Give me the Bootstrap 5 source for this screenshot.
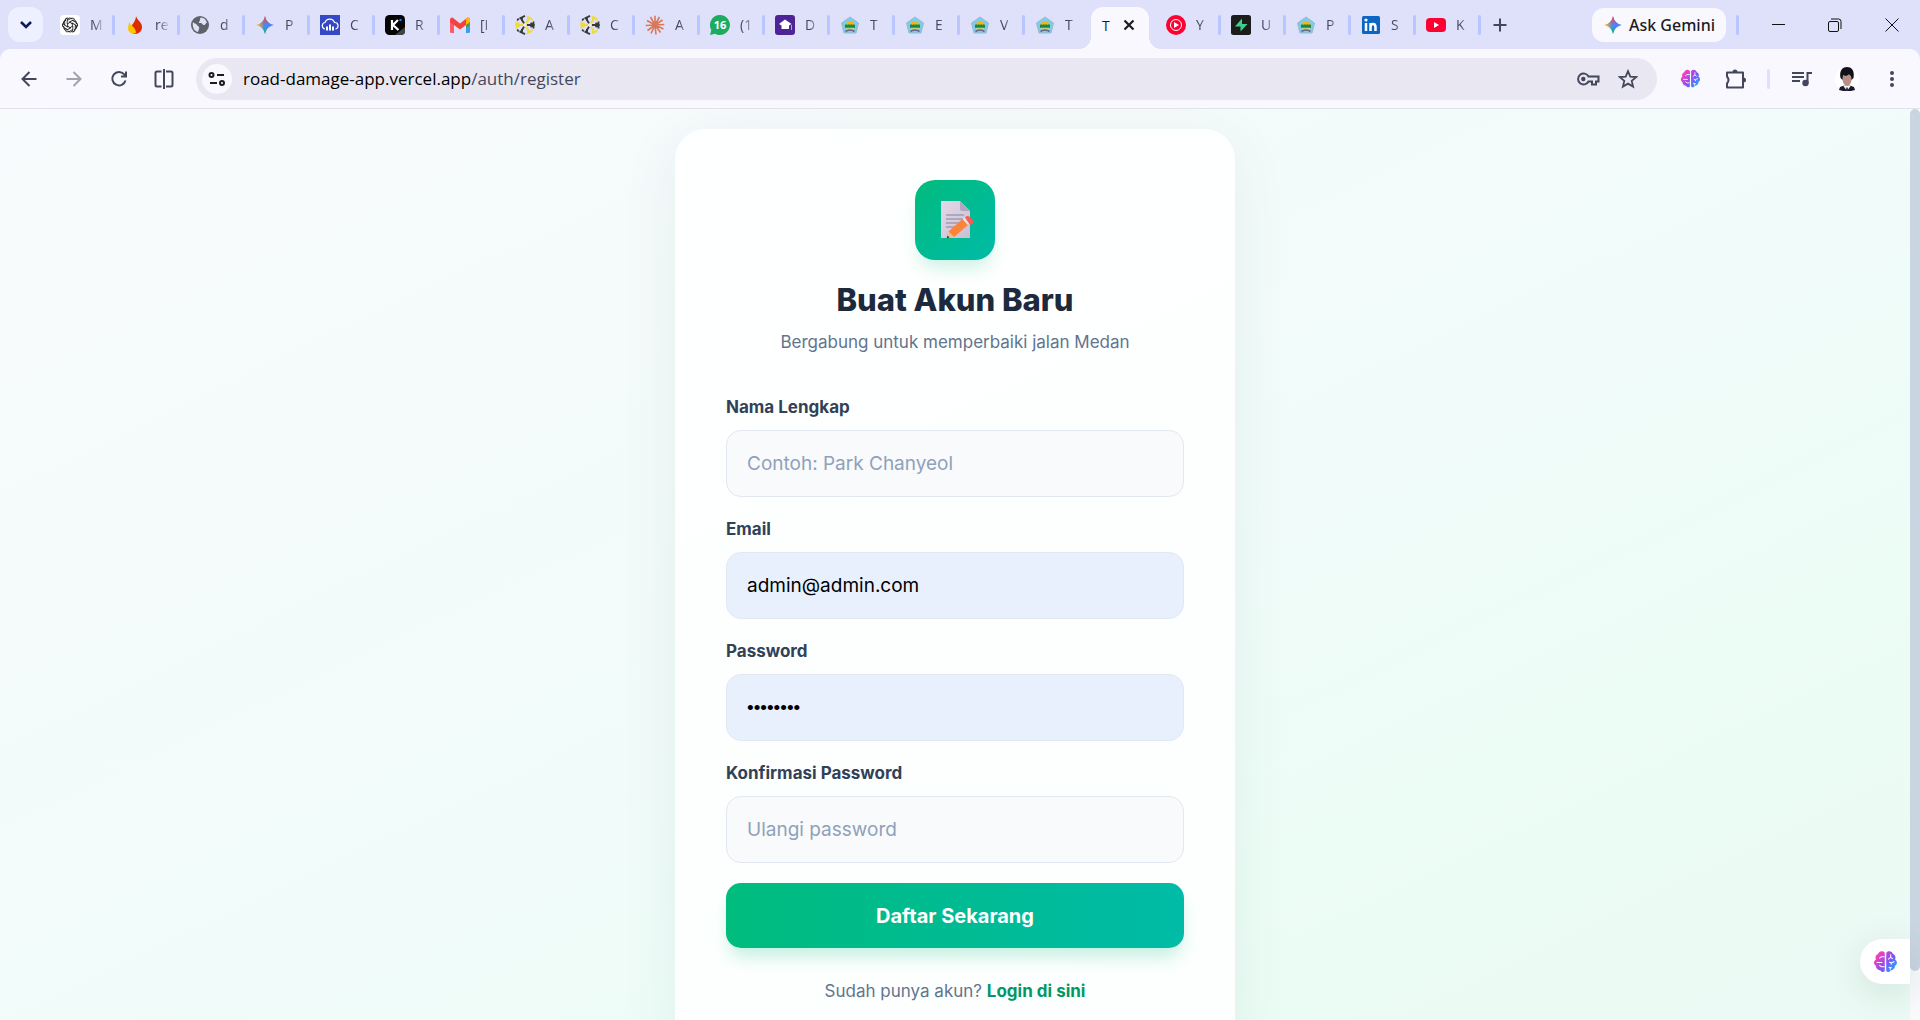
<!DOCTYPE html>
<html lang="id">
<head>
<meta charset="utf-8">
<meta name="viewport" content="width=device-width, initial-scale=1">
<title>Buat Akun Baru</title>
<link href="https://cdn.jsdelivr.net/npm/bootstrap@5.3.0/dist/css/bootstrap.min.css" rel="stylesheet">
<style>
html,body{height:100%}
body{overflow:hidden;font-family:Inter,"Open Sans",sans-serif;color:#1d293d;background:#f9f8ff}
.ui-font{font-family:"Open Sans","Noto Sans",sans-serif;background:#dfe0fa}
button,a{color:inherit}
.plain{border:0;background:none;padding:0;display:flex;align-items:center;justify-content:center;flex:none}
/* tab strip */
.strip{height:49px;padding-left:8px}
.search-tabs{width:35px;height:35px;border-radius:12px;background:#eef0ff;margin:7px 7px 0 0;align-self:flex-start}
.tab{width:65px;height:20px;padding-left:10px;gap:10px;flex:none;display:flex;align-items:center;color:#43475c;font-size:14px;text-decoration:none;position:relative}
.tab:not(.bare)::after{content:"";position:absolute;right:0;top:0;width:3px;height:20px;border-radius:2px;background:#b9c5ff}
.tab svg{width:20px;height:20px;flex:none}
.tab span{white-space:nowrap;-webkit-mask-image:linear-gradient(90deg,#000 4px,transparent 15px);mask-image:linear-gradient(90deg,#000 4px,transparent 15px)}
.tab-on{width:58px;height:42px;align-self:flex-end;background:#f9f8ff;border-radius:12px 12px 0 0;position:relative;margin:0 7px 0 1px;padding:0 14px 6px 11px;color:#1c1b20;font-size:14px;flex:none}
.tab-on::before,.tab-on::after{content:"";position:absolute;bottom:0;width:12px;height:12px}
.tab-on::before{left:-12px;background:radial-gradient(circle at 0 0,transparent 12px,#f9f8ff 12px)}
.tab-on::after{right:-12px;background:radial-gradient(circle at 100% 0,transparent 12px,#f9f8ff 12px)}
.new-tab{margin-left:12px}
.gemini{height:34px;width:134px;border-radius:12px;background:#f9f8ff;gap:6px;font-size:16px;font-weight:600;color:#1c1b20;font-family:"Noto Sans","Open Sans",sans-serif;font-weight:500}
.bar-sep{width:3px;height:20px;border-radius:2px;background:#b9c5ff;margin:0 10px}
.bar-sep.pale{background:#dfe0ff;margin:0 17px}
.win{width:57px;height:49px}
/* toolbar */
.tools{height:60px;border-bottom:1px solid #e2e1ec;border-radius:10px 10px 0 0;color:#43475c;padding:0 14px;background:#f9f8ff}
.tool{width:29px;height:29px}
.omni{height:42px;border-radius:21px;background:#e9e7f1;padding:0 15px 0 6px;margin:0 19px 0 18px;min-width:0;gap:11px}
.site-info{width:30px;height:30px;border-radius:50%;background:#f9f8ff;color:#1c1b20}
.url{font-size:17px;min-width:0}
/* page */
.viewport{min-height:0;overflow:hidden;background:#f8fafc}
.scene{background:linear-gradient(to bottom right,#f8fafc 0%,#f0fcf9 60%,#ecfdf5 76%,#ebfaf4 100%);min-width:0;overflow:hidden;padding-top:20px}
.signup{width:560px;height:fit-content;border:1px solid #fff;border-radius:30px;background:rgba(255,255,255,.85);padding:50px;box-shadow:0 14px 60px rgba(15,80,90,.07)}
.emblem{width:80px;height:80px;border-radius:20px;background:linear-gradient(135deg,#00bc7d,#00bba7);box-shadow:0 12px 18px -4px rgba(0,188,125,.2);margin-bottom:20px}
h1{font-size:31px;line-height:39px;font-weight:800;margin-bottom:10px;color:#1d293d}
.tagline{font-size:17px;line-height:26px;color:#62748e;margin-bottom:40px}
.field-label{font-size:17px;line-height:25px;font-weight:700;color:#314158;margin-bottom:10px;display:block}
.field{height:67px;border:1px solid #e2e8f0;border-radius:15px;background:#f8fafc;padding:0 20px;font-size:19px;color:#000;margin-bottom:20px}
.field::placeholder{color:#90a1b9;opacity:1}
.field.filled{background:#e8f0fe}
.field[type=password]:not(:placeholder-shown){font-family:"Liberation Sans",sans-serif}
.submit{height:65px;border:0;border-radius:15px;background:linear-gradient(90deg,#00bc7d,#00bba7);color:#fff;font-size:20px;font-weight:700;box-shadow:0 12px 18px -4px rgba(0,188,125,.24);margin-bottom:30px}
.foot{font-size:17px;line-height:26px;color:#62748e}
.foot a{color:#009966;font-weight:700;text-decoration:none}
.rail{width:10px;background:#f8fafc}
.thumb{height:862px;border-radius:5px;background:#cad5e2}
.brain-tab{position:absolute;right:10px;bottom:36px;width:50px;height:45px;border-radius:23px 0 0 23px;background:#fff;box-shadow:0 8px 36px rgba(0,60,40,.12)}
</style>
</head>
<body class="d-flex flex-column">
<svg width="0" height="0" class="position-absolute" aria-hidden="true">
<defs>
<linearGradient id="gb" x1="0" y1="0" x2="24" y2="20" gradientUnits="userSpaceOnUse"><stop offset=".08" stop-color="#ff9a1f"/><stop offset=".25" stop-color="#f23fc0"/><stop offset=".58" stop-color="#8a4df5"/><stop offset=".92" stop-color="#1fa8ff"/></linearGradient>
<linearGradient id="gp" x1="0" y1="0" x2="1" y2="1"><stop stop-color="#e3d9ea"/><stop offset="1" stop-color="#c9bfd3"/></linearGradient>
<linearGradient id="gs" x1="0" y1="0" x2="1" y2="0"><stop offset=".1" stop-color="#fbbc04"/><stop offset=".45" stop-color="#4a8af4"/><stop offset="1" stop-color="#3186ff"/></linearGradient>
<linearGradient id="gt" x1="0" y1="0" x2="0" y2="1"><stop offset=".1" stop-color="#f94543"/><stop offset=".5" stop-color="#f94543" stop-opacity="0"/><stop offset=".58" stop-color="#08b962" stop-opacity="0"/><stop offset=".95" stop-color="#08b962"/></linearGradient>
<symbol id="spark" viewBox="0 0 20 20"><path d="M10 1C11 6 14 9 19 10C14 11 11 14 10 19C9 14 6 11 1 10C6 9 9 6 10 1Z" fill="url(#gs)"/><path d="M10 1C11 6 14 9 19 10C14 11 11 14 10 19C9 14 6 11 1 10C6 9 9 6 10 1Z" fill="url(#gt)"/></symbol>
<symbol id="crest" viewBox="0 0 20 20"><path d="M10 2 18.500 8 16 18H4L1.500 8Z" fill="#7accf0" stroke="#9fb9c4" stroke-width="1"/><path d="M5.500 10.500C5.500 4.500 14.500 4.500 14.500 10.500Z" fill="#f9b313"/><path d="M5 10q1.200-1.500 2.500 0 1.200-1.500 2.500 0 1.200-1.500 2.500 0 1.200-1.500 2.500 0v3H5z" fill="#138b4c"/><path d="M5.500 13.200h9" stroke="#f3d33c" stroke-width=".8"/><path d="M5.500 16.500q4.500-3 9 0" stroke="#6a6285" stroke-width="1.700" fill="none"/></symbol>
<symbol id="wheel" viewBox="0 0 20 20"><g fill="none" stroke-width="1.800"><path d="M10 10 5.500 2.500M10 10h9M10 10 5.500 17.500" stroke="#393939"/><path d="M10 10l4.500-7.500M10 10H1M10 10l4.500 7.500" stroke="#eddb3a"/><path d="M4.500 3.500 10 .9M18.500 6.500v7M4.500 16.500 10 19.100M2.200 5.500l1.500-2M2.200 14.500l1.500 2M7 2v4M7 18v-4M15.500 8l3.500 2-3.500 2" stroke="#393939"/><path d="M12 1.500l4 2 1.500 2M1.500 6.500v7M12 18.500l4-2 1.500-2M13 2.500v4M13 17.500v-4M4.500 8 1 10l3.500 2" stroke="#eddb3a"/></g><circle cx="10" cy="10" r="2" fill="#eceaf0"/></symbol>
<symbol id="brain" viewBox="0 0 24 24"><path d="M11.300 3.500C9 1 5.500 2 4.800 4.800 2.500 5.500 1.800 8 2.800 10 .2 11.500.6 15 2.800 16 2.800 19 5.500 20.500 7 20.300 8 22.500 10.500 22.500 11.300 21Z" fill="url(#gb)"/><path d="M12.700 3.500C15 1 18.500 2 19.200 4.800 21.500 5.500 22.200 8 21.200 10 23.800 11.500 23.400 15 21.200 16 21.200 19 18.500 20.500 17 20.300 16 22.500 13.500 22.500 12.700 21Z" fill="url(#gb)"/><path d="M11 7.500H8L6 9M3.500 13H9M11 17H8l-2-1.500M17 5v3l-2.500 2M17 8l2 1.500M20.500 12l-3 1.500-2-1M17.500 13.500V15M15 17.500l3 .500M16.500 20v-2" stroke="#fff" stroke-width="1" fill="none"/></symbol>
</defs></svg>

<header class="flex-shrink-0 ui-font">
<div class="strip d-flex align-items-center">
<button class="plain search-tabs" aria-label="Cari tab"><svg width="14" height="10" viewBox="0 0 14 10"><path d="M2 2l5 5 5-5" fill="none" stroke="#0a1a5c" stroke-width="2.600"/></svg></button>
<nav class="d-flex align-items-center align-self-stretch" aria-label="Tab">
<a class="tab" href="#"><svg viewBox="0 0 20 20"><rect width="20" height="20" rx="4" fill="#fff"/><g fill="none" stroke="#222" stroke-width=".9"><path id="ol" d="M10.200 7.200 7.200 9V5.500Q7.200 3 9.600 3q1.600 0 2.600 1.200M7.200 5.500 11 3.400q2.500-1 4 1.200"/><use href="#ol" transform="rotate(60 10 10)"/><use href="#ol" transform="rotate(120 10 10)"/><use href="#ol" transform="rotate(180 10 10)"/><use href="#ol" transform="rotate(240 10 10)"/><use href="#ol" transform="rotate(300 10 10)"/></g></svg><span>M</span></a>
<a class="tab" href="#"><svg viewBox="0 0 20 20"><path d="M11 1c1 4 6 6 6 11 0 4-3 7-7 7-3 0-4-2-4-5 0-5 5-7 5-13Z" fill="#dd2c00"/><path d="M4 7c1 3 7 5 7 11-4 2-8-1-8-5 0-2 1-3 1-6Z" fill="#ffc400"/></svg><span>re</span></a>
<a class="tab" href="#"><svg viewBox="0 0 20 20"><circle cx="10" cy="10" r="9" fill="#5f6368"/><path d="M3 7c1 2 3 1 4 3s3 1 2 4l-1 3C4 16 2 12 3 7ZM10 3c4-1 6 2 7 5-2 0-1 2-3 2s-1-2-4-2 1-2 0-5Z" fill="#dfe0fa"/></svg><span>d</span></a>
<a class="tab" href="#"><svg><use href="#spark"/></svg><span>P</span></a>
<a class="tab" href="#"><svg viewBox="0 0 20 20"><rect width="20" height="20" fill="#3448c5"/><path d="M5 14a3.300 3.300 0 0 1 0-6.500 5 5 0 0 1 9.500 0A3.300 3.300 0 0 1 15.500 14" fill="none" stroke="#fff" stroke-width="1.200"/><path d="M7 11.500v4M10 9.500v6M13 11.500v4" stroke="#fff" stroke-width="2"/></svg><span>C</span></a>
<a class="tab" href="#"><svg viewBox="0 0 20 20"><rect width="20" height="20" rx="4.500" fill="#050505"/><path d="M10 20 20 12v5q0 3-4 3z" fill="#444"/><path d="M7 5v10M13 5l-5 5 5.500 5" fill="none" stroke="#fff" stroke-width="2.200"/><circle cx="15.500" cy="5" r="1.200" fill="#1783ff"/></svg><span>R</span></a>
<a class="tab" href="#"><svg viewBox="0 0 20 20"><path d="M0 6v10.500Q0 18 1.500 18H4V8z" fill="#ff5a6a"/><path d="M16 8v10h2.500q1.500 0 1.500-1.500V6z" fill="#3f9cf0"/><path d="M16 6v7l4-2V6z" fill="#34a853"/><path d="M0 5Q0 2.500 2.500 2.500L10 8.500l7.500-6Q20 2.500 20 5v2l-10 7.500L0 7z" fill="#f4433c"/><path d="M16 4l1.500-1.500Q20 2.500 20 5v2l-4 3z" fill="#fbbc04"/></svg><span>[I</span></a>
<a class="tab" href="#"><svg><use href="#wheel"/></svg><span>A</span></a>
<a class="tab" href="#"><svg><use href="#wheel"/></svg><span>C</span></a>
<a class="tab" href="#"><svg viewBox="0 0 20 20"><path d="M10 10V.7M10 10l4.500-8M10 10l7.500-5M10 10l9.300-.5M10 10l8.500 4M10 10l5.500 7.500M10 10l1 9.300M10 10l-4 8.500M10 10l-7.500 5.500M10 10l-9.300.5M10 10 2 5.500M10 10 5.500 2" stroke="#d97757" stroke-width="1.600"/></svg><span>A</span></a>
<a class="tab" href="#"><svg viewBox="0 0 20 20"><path d="M10 0a10 10 0 1 1-5 18.700L0 20l1.300-5A10 10 0 0 1 10 0Z" fill="#1dab61"/><text x="10" y="14" text-anchor="middle" font-size="11" font-weight="700" fill="#fff" font-family="Open Sans">16</text></svg><span>(1</span></a>
<a class="tab" href="#"><svg viewBox="0 0 20 20"><rect width="20" height="20" rx="3" fill="#4d2496"/><path d="M10 4.500 16.500 9 14 10.500V14H6.500v-3.500L4 9Z" fill="#fff"/><path d="M16.500 10v5" stroke="#f0a030"/></svg><span>D</span></a>
<a class="tab" href="#"><svg><use href="#crest"/></svg><span>T</span></a>
<a class="tab" href="#"><svg><use href="#crest"/></svg><span>E</span></a>
<a class="tab" href="#"><svg><use href="#crest"/></svg><span>V</span></a>
<a class="tab bare" href="#"><svg><use href="#crest"/></svg><span>T</span></a>
<div class="tab-on d-flex align-items-center justify-content-between"><span>T</span><button class="plain" aria-label="Tutup tab"><svg width="12" height="12" viewBox="0 0 12 12"><path d="M1.500 1.500l9 9M10.500 1.500l-9 9" stroke="#1c1b20" stroke-width="2.200"/></svg></button></div>
<a class="tab" href="#"><svg viewBox="0 0 20 20"><circle cx="10" cy="10" r="10" fill="#f03"/><circle cx="10" cy="10" r="5.500" fill="none" stroke="#fff" stroke-width="1"/><path d="M8 7v6l5-3z" fill="#fff"/></svg><span>Y</span></a>
<a class="tab" href="#"><svg viewBox="0 0 20 20"><rect width="20" height="20" rx="2.500" fill="#1c1c1c"/><path d="M11 3.500V9h5.500L9.500 16.500V11.500H4z" fill="#3ecf8e"/></svg><span>U</span></a>
<a class="tab" href="#"><svg><use href="#crest"/></svg><span>P</span></a>
<a class="tab" href="#"><svg viewBox="0 0 20 20"><rect x="1" y="1" width="18" height="18" rx="1.500" fill="#0a66c2"/><path d="M5 8v8M9.500 8v8M9.500 12q0-3 2.500-3t2.500 3v4" fill="none" stroke="#fff" stroke-width="2.500"/><circle cx="5" cy="5" r="1.600" fill="#fff"/></svg><span>S</span></a>
<a class="tab" href="#"><svg viewBox="0 0 20 20"><rect y="3" width="20" height="14" rx="4" fill="#f03"/><path d="M8 7v6l5-3z" fill="#fff"/></svg><span>K</span></a>
</nav>
<button class="plain new-tab" aria-label="Tab baru"><svg width="14" height="14" viewBox="0 0 14 14"><path d="M7 .5v13M.5 7h13" stroke="#43475c" stroke-width="2"/></svg></button>
<div class="d-flex align-items-center ms-auto">
<button class="plain gemini"><svg width="20" height="20"><use href="#spark"/></svg>Ask Gemini</button>
<span class="bar-sep"></span>
<button class="plain win" aria-label="Perkecil"><svg width="14" height="14"><path d="M1 6.500h13" stroke="#111"/></svg></button>
<button class="plain win" aria-label="Pulihkan"><svg width="14" height="14" fill="none" stroke="#111"><rect x=".5" y="3.500" width="10" height="10" rx="1.500"/><path d="M3 1h7.500Q13 1 13 3.500V11"/></svg></button>
<button class="plain win" aria-label="Tutup"><svg width="14" height="14"><path d="M.5.5l13 13M13.500.5l-13 13" stroke="#111"/></svg></button>
</div>
</div>
<div class="tools d-flex align-items-center">
<div class="d-flex align-items-center gap-3">
<button class="plain tool" aria-label="Kembali"><svg width="16" height="16" viewBox="0 0 16 16" fill="none" stroke="#43475c" stroke-width="2"><path d="M8.500 1 1.500 8l7 7M1.500 8H15.500"/></svg></button>
<button class="plain tool" aria-label="Maju"><svg width="16" height="16" viewBox="0 0 16 16" fill="none" stroke="#a3a2ac" stroke-width="2"><path d="M7.500 1l7 7-7 7M14.500 8H.5"/></svg></button>
<button class="plain tool" aria-label="Muat ulang"><svg width="18" height="18" viewBox="0 0 18 18" fill="none" stroke="#43475c" stroke-width="2"><path d="M15.500 10.500A6.700 6.700 0 1 1 14 4.200L16 6.500M16 1.500v5h-5"/></svg></button>
<button class="plain tool" aria-label="Layar terpisah"><svg width="20" height="20" viewBox="0 0 20 20" fill="none" stroke="#43475c" stroke-width="2"><path d="M7.500 2.500H3Q1.500 2.500 1.500 4V16Q1.500 17.500 3 17.500H7.500M10 0v20M12 2.500h5Q18.500 2.500 18.500 4V16Q18.500 17.500 17 17.500H12"/></svg></button>
</div>
<div class="omni d-flex align-items-center flex-grow-1">
<button class="plain site-info" aria-label="Info situs"><svg width="18" height="14" viewBox="0 0 18 14" fill="none" stroke="#1c1b20" stroke-width="2"><circle cx="3.500" cy="3" r="2"/><path d="M9 3h7M2 11h7"/><circle cx="14" cy="11" r="2"/></svg></button>
<div class="url flex-grow-1"><span class="text-black">road-damage-app.vercel.app</span>/auth/register</div>
<button class="plain tool" aria-label="Kata sandi"><svg width="24" height="16" viewBox="0 0 24 16" fill="none" stroke="#43475c" stroke-width="2"><path d="M12.500 5.500A5.500 5.500 0 1 0 12.500 10.500H16V13.500H20V10.500H22.500V5.500Z"/><circle cx="7.300" cy="8" r="2.200" fill="#43475c" stroke="none"/></svg></button>
<button class="plain tool" aria-label="Tandai"><svg width="20" height="20" viewBox="0 0 20 20" fill="none" stroke="#43475c" stroke-width="1.800"><path d="M10 2.200l2.300 5.400 5.900.5-4.500 3.800 1.400 5.700L10 14.600l-5.100 3 1.400-5.700L1.800 8.100l5.900-.5z"/></svg></button>
</div>
<button class="plain tool" aria-label="Ekstensi AI"><svg width="21" height="21"><use href="#brain"/></svg></button>
<button class="plain tool ms-3" aria-label="Ekstensi"><svg width="22" height="22" viewBox="0 0 22 22" fill="none" stroke="#43475c" stroke-width="2"><path d="M2 4.500H18V19.500H2V15.500Q5 12 2 8.500Z" stroke-linejoin="round"/><path d="M7.500 4a2.500 2.500 0 0 1 5 0zM18.500 9.500a2.500 2.500 0 0 1 0 5z" fill="#43475c" stroke="none"/></svg></button>
<span class="bar-sep pale"></span>
<button class="plain tool" aria-label="Media"><svg width="20" height="16" viewBox="0 0 20 16" fill="none" stroke="#43475c" stroke-width="2"><path d="M0 2h12M0 6h12M0 10h8M15.500 12V2H20"/><circle cx="13.500" cy="12" r="2.200" fill="#43475c"/></svg></button>
<button class="plain tool ms-3" aria-label="Profil"><svg width="24" height="24" viewBox="0 0 24 24"><circle cx="12" cy="12" r="12" fill="#fff"/><path d="M4 23l1-3 4-1.500h6l4 1.500 1 3-4 1H8z" fill="#1b1b26"/><path d="M8 18.500l4 5.500 4-5.500z" fill="#f6f2f4"/><path d="M11.300 20.500h1.400l.5 3.500h-2.400z" fill="#222a55"/><path d="M7.500 8h9v5q-.5 5-4.500 6-4-1-4.500-6z" fill="#b88f86"/><path d="M5.500 11C4 3 8 0 12 0s8 3 6.500 11l-2 2-.5-4-2-1.500-3 1.500-3-1-.5 5z" fill="#101218"/></svg></button>
<button class="plain tool ms-3" aria-label="Menu"><svg width="6" height="18" fill="#43475c"><circle cx="3" cy="3" r="2"/><circle cx="3" cy="9" r="2"/><circle cx="3" cy="15" r="2"/></svg></button>
</div>
</header>

<div class="viewport d-flex flex-grow-1 position-relative">
<main class="scene flex-grow-1 d-flex justify-content-center">
<form class="signup">
<div class="emblem d-flex align-items-center justify-content-center mx-auto"><svg width="36" height="38" viewBox="0 0 36 38"><path d="M4 0H23L33 10V37H4Z" fill="url(#gp)"/><path d="M23 0V8q0 2 2 2h8z" fill="#b3a6bf"/><path d="M9 14H27M9 18H27M9 22H23M9 26H19" stroke="#a39aae" stroke-width="1.600"/><path d="M10 37l1.500-6.500 5 5z" fill="#f3bd94"/><path d="M11.500 30.500 25.500 18l5.500 6-14 12z" fill="#fb8438"/><path d="M25.500 18l3-2.500 5.500 6-3 2.500z" fill="#e6dff0"/><path d="M28 16.500q2.500-3 6 .500t1 6l-2 1z" fill="#fa5c50"/><path d="M9.800 37.200l.700-2.700 2 2z" fill="#3c2a3c"/></svg></div>
<h1 class="text-center">Buat Akun Baru</h1>
<p class="tagline text-center">Bergabung untuk memperbaiki jalan Medan</p>
<label class="field-label" for="nama">Nama Lengkap</label>
<input class="field w-100" id="nama" type="text" placeholder="Contoh: Park Chanyeol">
<label class="field-label" for="email">Email</label>
<input class="field filled w-100" id="email" type="email" value="admin@admin.com">
<label class="field-label" for="sandi">Password</label>
<input class="field filled w-100" id="sandi" type="password" placeholder=" " value="admin123">
<label class="field-label" for="ulang">Konfirmasi Password</label>
<input class="field w-100" id="ulang" type="password" placeholder="Ulangi password">
<button class="submit w-100" type="submit">Daftar Sekarang</button>
<p class="foot text-center mb-0">Sudah punya akun? <a href="#">Login di sini</a></p>
</form>
</main>
<div class="rail flex-shrink-0"><div class="thumb"></div></div>
<button class="plain brain-tab" aria-label="Asisten"><svg width="25" height="25"><use href="#brain"/></svg></button>
</div>
<script src="https://cdn.jsdelivr.net/npm/bootstrap@5.3.0/dist/js/bootstrap.bundle.min.js"></script>
</body>
</html>
